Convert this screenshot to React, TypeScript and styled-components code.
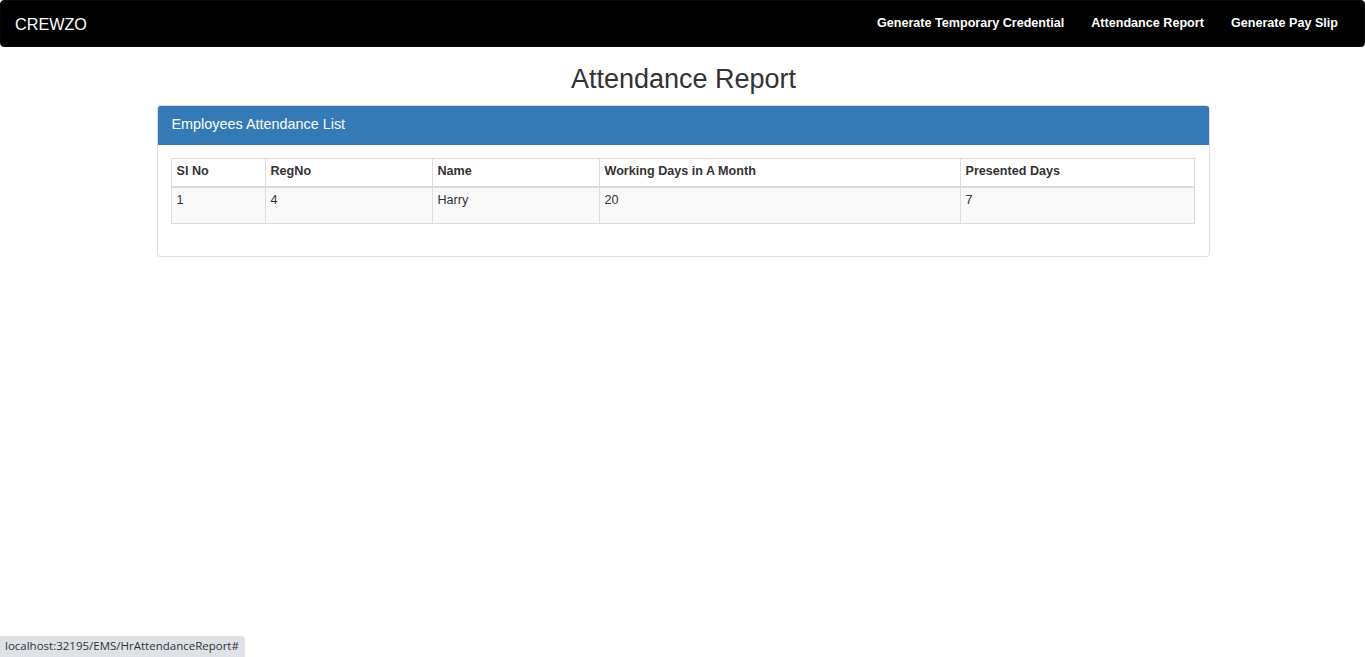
import styled, { createGlobalStyle } from "styled-components";

interface AttendanceRow {
  slNo: number;
  regNo: number;
  name: string;
  workingDays: number;
  presentedDays: number;
}

const rows: AttendanceRow[] = [
  { slNo: 1, regNo: 4, name: "Harry", workingDays: 20, presentedDays: 7 },
];

const columns = [
  { label: "Sl No", width: 94 },
  { label: "RegNo", width: 167 },
  { label: "Name", width: 167 },
  { label: "Working Days in A Month", width: 361 },
  { label: "Presented Days", width: 234 },
];

const navLinks = [
  "Generate Temporary Credential",
  "Attendance Report",
  "Generate Pay Slip",
];

export default function App() {
  return (
    <>
      <GlobalStyle />
      <S.Navbar>
        <S.Brand href="#">CREWZO</S.Brand>
        <S.NavList>
          {navLinks.map((link) => (
            <li key={link}>
              <S.NavLink href="#">{link}</S.NavLink>
            </li>
          ))}
        </S.NavList>
      </S.Navbar>

      <S.Container>
        <S.Title>Attendance Report</S.Title>

        <S.Panel>
          <S.PanelHeading>Employees Attendance List</S.PanelHeading>
          <S.PanelBody>
            <S.Table>
              <colgroup>
                {columns.map((col) => (
                  <col key={col.label} style={{ width: col.width }} />
                ))}
              </colgroup>
              <thead>
                <tr>
                  {columns.map((col) => (
                    <S.Th key={col.label}>{col.label}</S.Th>
                  ))}
                </tr>
              </thead>
              <tbody>
                {rows.map((row) => (
                  <S.Row key={row.slNo}>
                    <S.Td>{row.slNo}</S.Td>
                    <S.Td>{row.regNo}</S.Td>
                    <S.Td>{row.name}</S.Td>
                    <S.Td>{row.workingDays}</S.Td>
                    <S.Td>{row.presentedDays}</S.Td>
                  </S.Row>
                ))}
              </tbody>
            </S.Table>
          </S.PanelBody>
        </S.Panel>
      </S.Container>

      <S.StatusBar>localhost:32195/EMS/HrAttendanceReport#</S.StatusBar>
    </>
  );
}

const GlobalStyle = createGlobalStyle`
  * {
    box-sizing: border-box;
  }
  html, body {
    margin: 0;
    padding: 0;
    background: #fff;
  }
  body {
    font-family: "Liberation Sans", Arial, sans-serif;
    font-size: 12.6px;
    line-height: 1.42857;
    color: #333;
  }
  ul {
    margin: 0;
    padding: 0;
    list-style: none;
  }
`;

const S = {
  Navbar: styled.nav`
    height: 47px;
    background: #000;
    border: 1px solid #080808;
    border-radius: 4px;
    display: flex;
    align-items: center;
    justify-content: space-between;
    padding: 1px 12.5px 0 14px;
  `,

  Brand: styled.a`
    color: #fff;
    font-size: 16.2px;
    text-decoration: none;
    line-height: 20px;
  `,

  NavList: styled.ul`
    display: flex;
  `,

  NavLink: styled.a`
    display: block;
    padding: 0 13.5px;
    color: #fff;
    font-weight: bold;
    font-size: 12.6px;
    text-decoration: none;
  `,

  Container: styled.div`
    margin: 0 155px 0 157px;
  `,

  Title: styled.h2`
    margin: 18px 0 10px;
    text-align: center;
    font-size: 27px;
    font-weight: normal;
    line-height: 1.1;
    color: #333;
  `,

  Panel: styled.div`
    border: 1px solid #ddd;
    border-radius: 3.6px;
    box-shadow: 0 1px 1px rgba(0, 0, 0, 0.05);
    overflow: hidden;
  `,

  PanelHeading: styled.div`
    height: 39px;
    padding: 0 13.5px 2px;
    display: flex;
    align-items: center;
    background: #337ab7;
    color: #fff;
    font-size: 14.4px;
  `,

  PanelBody: styled.div`
    padding: 13.5px 14.5px 14px 12.5px;
  `,

  Table: styled.table`
    width: 100%;
    border-collapse: collapse;
    table-layout: fixed;
    margin-bottom: 18px;
    border: 1px solid #ddd;
  `,

  Th: styled.th`
    text-align: left;
    font-weight: bold;
    padding: 2.5px 5px 6px;
    border: 1px solid #ddd;
    border-bottom: 2px solid #ddd;
    line-height: 18px;
  `,

  Row: styled.tr`
    background: #f9f9f9;
    height: 37px;
  `,

  Td: styled.td`
    vertical-align: top;
    padding: 3.5px 5px 5.5px;
    border: 1px solid #ddd;
    line-height: 18px;
  `,

  StatusBar: styled.div`
    position: fixed;
    left: 0;
    bottom: 0;
    height: 21px;
    padding: 0 6px 0 5px;
    display: flex;
    align-items: center;
    background: #dee1e6;
    border-top-right-radius: 4px;
    font-family: "Open Sans", "Noto Sans", sans-serif;
    font-size: 11.5px;
    color: #333;
  `,
};
